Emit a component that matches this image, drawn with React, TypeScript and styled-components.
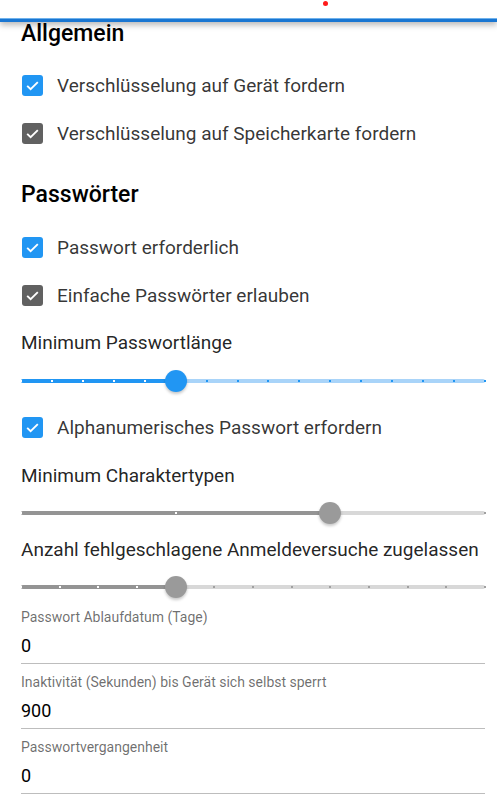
import React from "react";
import styled, { createGlobalStyle } from "styled-components";

const Global = createGlobalStyle`
  html, body { margin: 0; padding: 0; background: #fff; }
  body { font-family: Roboto, "Noto Sans", Arial, sans-serif; -webkit-font-smoothing: antialiased; }
  * { box-sizing: border-box; }
`;

const Page = styled.div`
  width: 497px;
  height: 800px;
  overflow: hidden;
  display: flex;
  flex-direction: column;
`;

const Header = styled.header`
  position: relative;
  height: 22px;
  flex: none;
  background: #fff;
  border-bottom: 4px solid #1976d2;
  box-shadow: 0 3px 6px rgba(0, 0, 0, 0.28);
  z-index: 2;
  &::after {
    content: "";
    position: absolute;
    left: 0;
    right: 0;
    bottom: -1px;
    height: 1px;
    background: #6fb2ec;
  }
`;

const Dot = styled.span`
  position: absolute;
  left: 323px;
  top: 1px;
  width: 5px;
  height: 5px;
  border-radius: 50%;
  background: #ff1a1a;
`;

const Content = styled.main`
  display: flex;
  flex-direction: column;
  padding: 0 12px 0 21px;
`;

const Heading = styled.h2<{ $mt: number }>`
  margin: ${(p) => p.$mt}px 0 0;
  font-size: 23px;
  line-height: 24px;
  font-weight: 500;
  color: #000;
`;

const CheckRow = styled.label<{ $mt?: number }>`
  display: flex;
  align-items: center;
  height: 48px;
  margin-top: ${(p) => p.$mt ?? 0}px;
  gap: 14px;
  font-size: 19px;
  color: rgba(0, 0, 0, 0.8);
`;

const Box = styled.span<{ $tone: "blue" | "gray" }>`
  width: 21px;
  height: 21px;
  margin-left: 1px;
  border-radius: 3px;
  background: ${(p) => (p.$tone === "blue" ? "#2196f3" : "#616161")};
  display: flex;
  align-items: center;
  justify-content: center;
  flex: none;
`;

const FieldLabel = styled.div<{ $mt: number }>`
  margin-top: ${(p) => p.$mt}px;
  font-size: 19px;
  line-height: 24px;
  color: rgba(0, 0, 0, 0.87);
`;

const SliderWrap = styled.div<{ $mt: number }>`
  position: relative;
  margin-top: ${(p) => p.$mt}px;
  height: 32px;
  width: 464px;
`;

const Rail = styled.div<{ $color: string }>`
  position: absolute;
  left: 0;
  right: 0;
  top: 14px;
  height: 4px;
  border-radius: 2px;
  background: ${(p) => p.$color};
`;

const Track = styled.div<{ $color: string }>`
  position: absolute;
  left: 0;
  top: 14px;
  height: 4px;
  border-radius: 2px;
  background: ${(p) => p.$color};
`;

const Mark = styled.span<{ $color: string }>`
  position: absolute;
  top: 15px;
  width: 2px;
  height: 2px;
  margin-left: -1px;
  background: ${(p) => p.$color};
`;

const Thumb = styled.span<{ $color: string }>`
  position: absolute;
  top: 5px;
  width: 22px;
  height: 22px;
  margin-left: -11px;
  border-radius: 50%;
  background: ${(p) => p.$color};
  box-shadow: 0 2px 3px rgba(0, 0, 0, 0.22);
`;

const Field = styled.div<{ $mt: number }>`
  margin-top: ${(p) => p.$mt}px;
  width: 464px;
  display: flex;
  flex-direction: column;
  border-bottom: 1px solid #bdbdbd;
  padding-bottom: 5px;
`;

const SmallLabel = styled.span`
  font-size: 14px;
  line-height: 16px;
  color: rgba(0, 0, 0, 0.58);
`;

const Value = styled.span`
  margin-top: 9px;
  font-size: 18px;
  line-height: 24px;
  color: #000;
`;

const Check = ({ tone }: { tone: "blue" | "gray" }) => (
  <Box $tone={tone}>
    <svg width="15" height="15" viewBox="0 0 24 24">
      <path d="M3.5 12.5 L9 18 L20.5 6.5" fill="none" stroke="#fff" strokeWidth="3" />
    </svg>
  </Box>
);

type SliderProps = {
  mt: number;
  steps: number;
  value: number;
  tone: "blue" | "gray";
};

const Slider = ({ mt, steps, value, tone }: SliderProps) => {
  const pct = (value / steps) * 100;
  const c =
    tone === "blue"
      ? { rail: "#a9d4f9", track: "#2196f3", thumb: "#2196f3", on: "#ffffff", off: "#2196f3" }
      : { rail: "#d8d8d8", track: "#949494", thumb: "#9a9a9a", on: "#ffffff", off: "#a0a0a0" };
  const marks = Array.from({ length: steps + 1 }, (_, i) => i);
  return (
    <SliderWrap $mt={mt}>
      <Rail $color={c.rail} />
      <Track $color={c.track} style={{ width: `${pct}%` }} />
      {marks.map((i) => (
        <Mark
          key={i}
          $color={i < value ? c.on : c.off}
          style={{ left: `${(i / steps) * 100}%` }}
        />
      ))}
      <Thumb $color={c.thumb} style={{ left: `${pct}%` }} />
    </SliderWrap>
  );
};

export default function App() {
  return (
    <Page>
      <Global />
      <Header>
        <Dot />
      </Header>
      <Content>
        <Heading $mt={0}>Allgemein</Heading>
        <CheckRow $mt={15}>
          <Check tone="blue" />
          Verschlüsselung auf Gerät fordern
        </CheckRow>
        <CheckRow>
          <Check tone="gray" />
          Verschlüsselung auf Speicherkarte fordern
        </CheckRow>

        <Heading $mt={26}>Passwörter</Heading>
        <CheckRow $mt={16}>
          <Check tone="blue" />
          Passwort erforderlich
        </CheckRow>
        <CheckRow>
          <Check tone="gray" />
          Einfache Passwörter erlauben
        </CheckRow>

        <FieldLabel $mt={12}>Minimum Passwortlänge</FieldLabel>
        <Slider mt={10} steps={15} value={5} tone="blue" />
        <CheckRow $mt={6}>
          <Check tone="blue" />
          Alphanumerisches Passwort erfordern
        </CheckRow>

        <FieldLabel $mt={13}>Minimum Charaktertypen</FieldLabel>
        <Slider mt={9} steps={3} value={2} tone="gray" />

        <FieldLabel $mt={9}>Anzahl fehlgeschlagene Anmeldeversuche zugelassen</FieldLabel>
        <Slider mt={9} steps={12} value={4} tone="gray" />

        <Field $mt={6}>
          <SmallLabel>Passwort Ablaufdatum (Tage)</SmallLabel>
          <Value>0</Value>
        </Field>
        <Field $mt={10}>
          <SmallLabel>Inaktivität (Sekunden) bis Gerät sich selbst sperrt</SmallLabel>
          <Value>900</Value>
        </Field>
        <Field $mt={10}>
          <SmallLabel>Passwortvergangenheit</SmallLabel>
          <Value>0</Value>
        </Field>
      </Content>
    </Page>
  );
}
